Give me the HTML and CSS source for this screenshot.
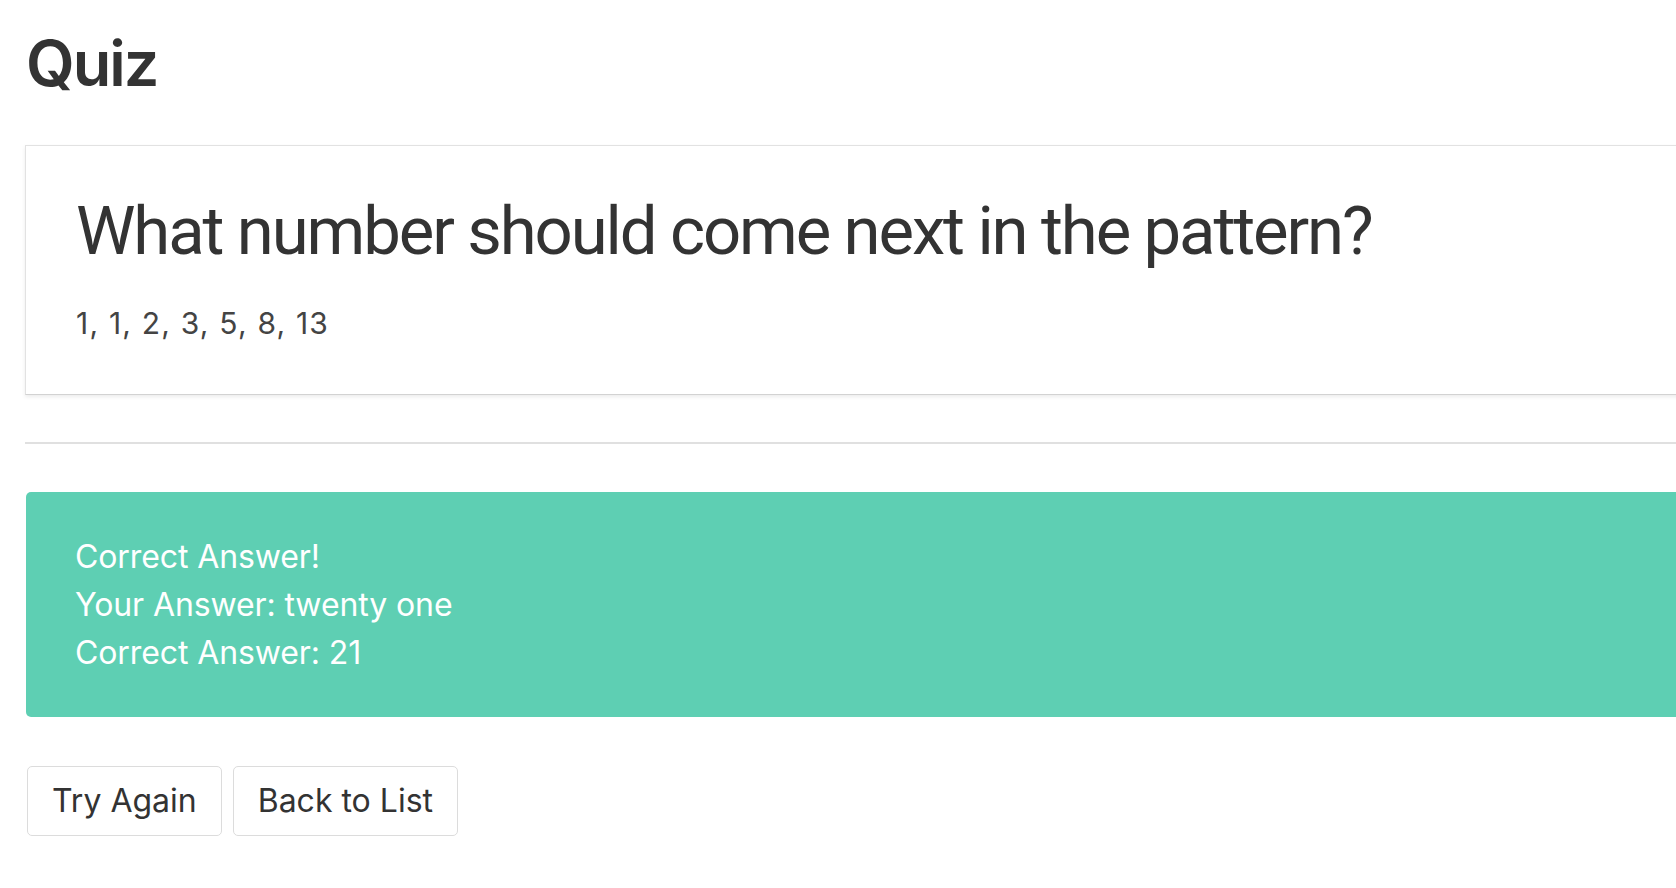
FILE: index.html
```html
<!DOCTYPE html>
<html lang="en">
<head>
<meta charset="utf-8">
<title>Quiz</title>
<link rel="stylesheet" href="styles.css">
</head>
<body>
<div class="page">
  <h1 class="title">Quiz</h1>
  <section class="card">
    <h2 class="question">What number should come next in the pattern?</h2>
    <p class="pattern">1, 1, 2, 3, 5, 8, 13</p>
  </section>
  <hr class="divider">
  <div class="alert">
    <div class="alert-line">Correct Answer!</div>
    <div class="alert-line">Your Answer: twenty one</div>
    <div class="alert-line">Correct Answer: 21</div>
  </div>
  <div class="actions">
    <button class="btn" type="button">Try Again</button>
    <button class="btn" type="button">Back to List</button>
  </div>
</div>
</body>
</html>
```

FILE: styles.css
```css
html, body {
  margin: 0;
  padding: 0;
  background: #fff;
  overflow: hidden;
}

body {
  font-family: Inter, "Noto Sans", sans-serif;
  color: #333;
}

.page {
  width: 1800px;
  padding: 25px 0 0 25px;
  display: flex;
  flex-direction: column;
  align-items: flex-start;
}

.title {
  margin: 0;
  font-size: 63px;
  line-height: 76px;
  font-weight: 600;
  letter-spacing: -2px;
  color: #333;
  padding-left: 1px;
}

.card {
  align-self: stretch;
  margin-top: 44px;
  border: 1px solid #e2e2e2;
  border-bottom-color: #d2d2d2;
  box-shadow: 0 2px 4px rgba(0, 0, 0, 0.08);
  padding: 49px 50px 53px 50px;
  background: #fff;
}

.question {
  margin: 0;
  font-family: Roboto, Inter, sans-serif;
  font-size: 67px;
  line-height: 72px;
  font-weight: 400;
  letter-spacing: -2.1px;
  color: #333;
}

.pattern {
  margin: 38px 0 0 0;
  font-size: 30px;
  line-height: 36px;
  letter-spacing: 1.2px;
  color: #444;
}

.divider {
  align-self: stretch;
  margin: 47px 0 0 0;
  border: 0;
  border-top: 2px solid #e0e0e0;
  height: 0;
}

.alert {
  align-self: stretch;
  margin-top: 48px;
  margin-left: 1px;
  background: #5ecfb3;
  border-radius: 5px;
  padding: 41px 49px 40px;
  color: #fff;
  font-size: 32px;
  line-height: 48px;
  letter-spacing: -0.1px;
}

.actions {
  margin-top: 49px;
  margin-left: 2px;
  display: flex;
  gap: 11px;
}

.btn {
  font-family: Inter, "Noto Sans", sans-serif;
  font-size: 32px;
  line-height: 40px;
  height: 70px;
  padding: 0 24px;
  color: #333;
  background: #fff;
  border: 1px solid #dcdcdc;
  border-radius: 5px;
}
```
